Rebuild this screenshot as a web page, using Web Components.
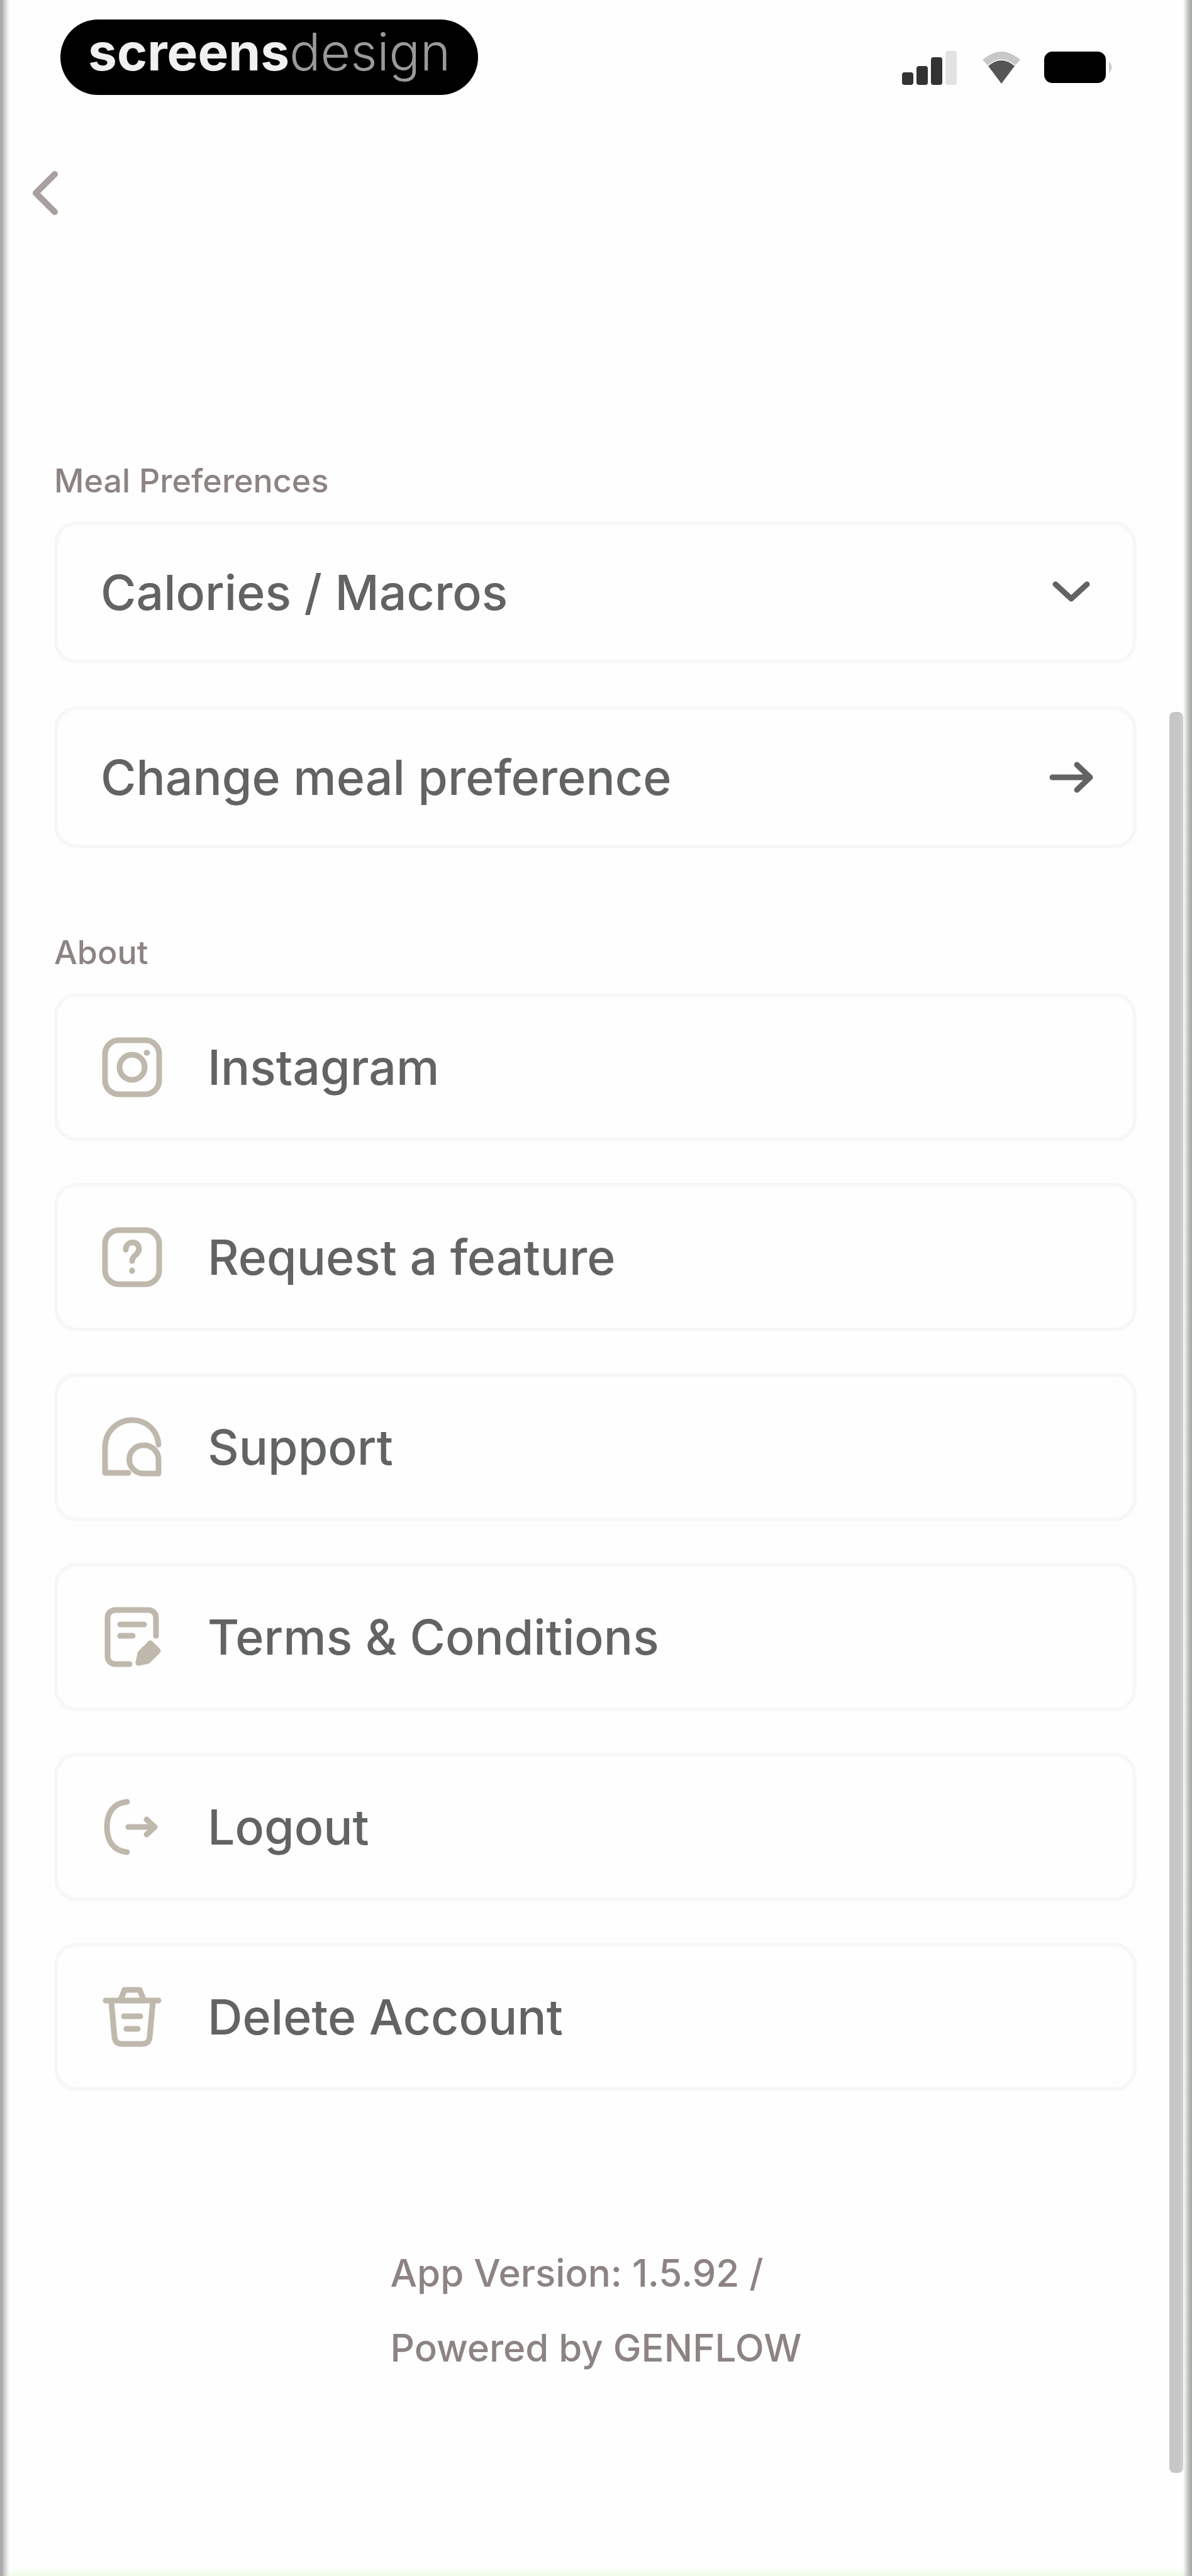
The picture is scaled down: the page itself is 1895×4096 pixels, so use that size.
<!DOCTYPE html>
<html lang="en">
<head>
<meta charset="utf-8">
<meta name="viewport" content="width=device-width, initial-scale=1">
<title>Settings</title>
<style>
:root {
	--common-font: "Inter", "Liberation Sans", sans-serif;
	--ink: #626464;
	--muted: #8d8383;
	--icon: #bfb8ac;
	--line: #f7f7f7;
	--paper: #fefefe;
}

body {
	margin: 0;
	background: var(--paper);
	font-family: var(--common-font);
}
</style>
</head>
<body>
<settings-screen>
	<status-bar slot="top"></status-bar>
	<settings-group heading="Meal Preferences">
		<settings-row trailing="chevron">Calories / Macros</settings-row>
		<settings-row trailing="arrow">Change meal preference</settings-row>
	</settings-group>
	<settings-group heading="About" class="tall">
		<settings-row icon="instagram">Instagram</settings-row>
		<settings-row icon="question">Request a feature</settings-row>
		<settings-row icon="support">Support</settings-row>
		<settings-row icon="terms">Terms &amp; Conditions</settings-row>
		<settings-row icon="logout">Logout</settings-row>
		<settings-row icon="trash">Delete Account</settings-row>
	</settings-group>
	<app-version slot="bottom">
		<span>App Version: 1.5.92 /</span>
		<span>Powered by GENFLOW</span>
	</app-version>
</settings-screen>

<script>
const icons = {
	instagram: `
		<rect x="7" y="7" width="86" height="86" rx="22" />
		<circle cx="50" cy="50" r="20" />
		<path d="M73 27h1" />`,
	question: `
		<rect x="7" y="7" width="86" height="86" rx="22" />
		<path d="M40 38c0-15 21-15 21-1 0 9-11 10-11 19M50 71v1" />`,
	support: `
		<path d="M92 46C90 22 72 7 50 7 26 7 7 26 7 50v41h37" />
		<path d="M68 47a22 22 0 1 0 0 45h24V70a23 23 0 0 0-24-23z" />`,
	terms: `
		<path d="M88 48V20c0-8-5-13-13-13H24c-8 0-13 5-13 13v60c0 8 5 13 13 13h22" />
		<path d="M31 30h38M31 48h20" />
		<path d="M60 91l3-15 16-16 12 12-16 16z" fill="currentColor" />`,
	logout: `
		<path d="M42 10C20 12 10 28 10 50s10 38 32 40" />
		<path d="M44 50h42M73 38l13 12-13 12" />`,
	trash: `
		<path d="M8 24h84M32 22l6-15h24l6 15" />
		<path d="M17 26l5 56c1 8 5 11 12 11h32c7 0 11-3 12-11l5-56" />
		<path d="M37 49h26M41 69h18" />`,
	chevron: '<path d="M25 37l25 23 25-23" />',
	arrow: '<path d="M20 50h60M59 30l21 20-21 20" />'
};

class SettingsScreen extends HTMLElement {
	constructor() {
		super();
		this.attachShadow({ mode: 'open' });
		this.shadowRoot.innerHTML = `
		<style>
		:host {
			display: flex;
			flex-direction: column;
			box-sizing: border-box;
			min-height: 100vh;
			position: relative;
			background:
				linear-gradient(to right, #aaa 3px, #d4d4d4 8px, transparent 15px),
				linear-gradient(to left, #a6a8a6, #b4b6b3 4px, transparent 14px),
				linear-gradient(to top, #effdea, transparent 14px);
		}

		main {
			padding: 0 88px 0 86px;
		}

		.back {
			display: block;
			width: 100px;
			height: 100px;
			margin: 106px 0 376px 22px;
			padding: 0;
			border: 0;
			background: none;
			color: #a89f9f;
		}

		.back svg {
			display: block;
			fill: none;
			stroke: currentColor;
			stroke-width: 10;
			stroke-linecap: round;
			stroke-linejoin: round;
		}

		/* scroll thumb, drawn over the content */
		.thumb {
			position: absolute;
			top: 1132px;
			right: 14px;
			bottom: 164px;
			width: 22px;
			border-radius: 8px;
			background: linear-gradient(to right, #c6c6c6 14px, #d0d2cf);
		}
		</style>
		<slot name="top"></slot>
		<button class="back" type="button" aria-label="Back">
			<svg viewBox="0 0 100 100"><path d="M65 20L35 50l30 30" /></svg>
		</button>
		<main><slot></slot></main>
		<slot name="bottom"></slot>
		<div class="thumb"></div>
		`;
	}
}

class StatusBar extends HTMLElement {
	constructor() {
		super();
		this.attachShadow({ mode: 'open' });
		this.shadowRoot.innerHTML = `
		<style>
		:host {
			display: flex;
			justify-content: space-between;
			align-items: flex-start;
			padding: 31px 120px 0 96px;
		}

		.brand {
			box-sizing: border-box;
			height: 120px;
			padding: 0 44px;
			border-radius: 60px;
			background: #000;
			color: #9a9a9a;
			font-size: 82px;
			line-height: 104px;
			white-space: nowrap;
		}

		.brand b {
			color: #f0f0f0;
			font-weight: 700;
		}

		.brand span {
			font-weight: 300;
		}

		.signals {
			display: flex;
			align-items: center;
			gap: 28px;
			padding-top: 42px;
		}
		</style>
		<div class="brand"><b>screens</b><span>design</span></div>
		<div class="signals">
			<svg width="96" height="68" viewBox="0 0 96 68" fill="#333">
				<rect x="4" y="42" width="18" height="20" rx="4" />
				<rect x="27" y="32" width="18" height="30" rx="4" />
				<rect x="50" y="18" width="18" height="44" rx="4" />
				<rect x="73" y="8" width="18" height="54" rx="4" fill="#e2e2e2" />
			</svg>
			<svg width="76" height="68" viewBox="0 0 76 68">
				<path d="M8 22Q38-4 68 22L60 31Q38 12 16 31z" fill="#c8c8c8" />
				<path d="M17 32Q38 14 59 32L38 60z" fill="#555" />
			</svg>
			<svg width="117" height="68" viewBox="0 0 117 68">
				<rect x="2" y="9" width="98" height="50" rx="13" />
				<path d="M105 25q9 9 0 18z" fill="#ccc" />
			</svg>
		</div>
		`;
	}
}

class SettingsGroup extends HTMLElement {
	constructor() {
		super();
		this.attachShadow({ mode: 'open' });
		this.shadowRoot.innerHTML = `
		<style>
		:host {
			display: block;
			--row-height: 226px;
			--row-gap: 68px;
		}

		:host(.tall) {
			margin-top: 134px;
			--row-height: 236px;
			--row-gap: 66px;
		}

		h2 {
			margin: 0 0 32px;
			color: var(--muted);
			font-size: 52px;
			font-weight: 500;
			line-height: 64px;
		}

		.rows {
			display: flex;
			flex-direction: column;
			gap: var(--row-gap);
		}
		</style>
		<h2>${this.getAttribute('heading')}</h2>
		<div class="rows"><slot></slot></div>
		`;
	}
}

class SettingsRow extends HTMLElement {
	constructor() {
		super();
		this.attachShadow({ mode: 'open' });
		this.shadowRoot.innerHTML = `
		<style>
		:host {
			display: block;
		}

		button {
			display: flex;
			align-items: center;
			box-sizing: border-box;
			width: 100%;
			height: var(--row-height);
			padding: 0 48px 0 68px;
			border: 6px solid var(--line);
			border-radius: 36px;
			background: var(--paper);
			color: var(--ink);
			font: 500 77px/96px var(--common-font);
			text-align: left;
		}

		.label {
			flex: 1;
		}

		svg {
			width: 100px;
			height: 100px;
			fill: none;
			stroke: currentColor;
			stroke-width: 9;
			stroke-linecap: round;
			stroke-linejoin: round;
		}

		.lead {
			margin-right: 70px;
			color: var(--icon);
		}
		</style>
		<button type="button">
			${this._icon('icon', 'lead')}
			<span class="label"><slot></slot></span>
			${this._icon('trailing', 'trail')}
		</button>
		`;
	}

	_icon(attribute, className) {
		const name = this.getAttribute(attribute);
		if (!name) return '';
		return `<svg class="${className}" viewBox="0 0 100 100">${icons[name]}</svg>`;
	}
}

class AppVersion extends HTMLElement {
	constructor() {
		super();
		this.attachShadow({ mode: 'open' });
		this.shadowRoot.innerHTML = `
		<style>
		:host {
			display: flex;
			justify-content: center;
			padding: 230px 0 260px;
			color: var(--muted);
			font-size: 60px;
			font-weight: 500;
			line-height: 119px;
		}

		div {
			display: flex;
			flex-direction: column;
		}
		</style>
		<div><slot></slot></div>
		`;
	}
}

customElements.define('settings-screen', SettingsScreen);
customElements.define('status-bar', StatusBar);
customElements.define('settings-group', SettingsGroup);
customElements.define('settings-row', SettingsRow);
customElements.define('app-version', AppVersion);
</script>
</body>
</html>
